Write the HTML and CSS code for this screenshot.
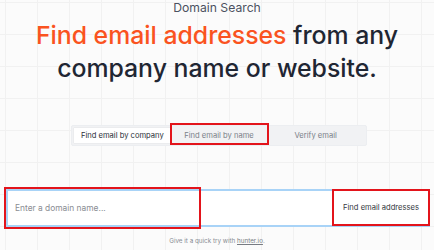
FILE: index.html
```html
<!DOCTYPE html>
<html>
<head>
<meta charset="utf-8">
<link rel="stylesheet" href="styles.css">
</head>
<body>
<main class="page">
  <p class="eyebrow">Domain Search</p>
  <h1 class="title"><span class="accent">Find email addresses</span> from any<br>company name or website.</h1>
  <nav class="tabs">
    <span class="tab active">Find email by company</span>
    <span class="tab marked">Find email by name</span>
    <span class="tab">Verify email</span>
  </nav>
  <form class="search">
    <div class="field"><span class="placeholder">Enter a domain name...</span></div>
    <button class="submit" type="button">Find email addresses</button>
  </form>
  <p class="hint">Give it a quick try with <a href="#">hunter.io</a>.</p>
</main>
</body>
</html>
```
FILE: styles.css
```css
* { box-sizing: border-box; }
html, body { margin: 0; }
body {
  width: 434px;
  height: 250px;
  overflow: hidden;
  font-family: Inter, "Liberation Sans", sans-serif;
  background-color: #fbfbfb;
  background-image:
    linear-gradient(to right, #f1f1f1 1px, transparent 1px),
    linear-gradient(to bottom, #f1f1f1 1px, transparent 1px);
  background-size: 32px 32px;
  background-position: 5px 2px;
}
.page {
  display: flex;
  flex-direction: column;
  align-items: center;
}
.eyebrow {
  margin: 0;
  font-size: 12.2px;
  line-height: 16px;
  color: #4b5160;
}
.title {
  margin: 3px 0 0;
  font-size: 24.8px;
  line-height: 33px;
  font-weight: 500;
  text-align: center;
  color: #1f2633;
}
.accent { color: #fa5320; }
.tabs {
  margin-top: 40px;
  margin-left: 4px;
  width: 296px;
  height: 21px;
  padding: 2px;
  display: flex;
  background: #f1f2f4;
  border: 1px solid #eceef1;
  border-radius: 2px;
}
.tab {
  flex: 1;
  display: flex;
  align-items: center;
  justify-content: center;
  font-size: 7.6px;
  white-space: nowrap;
  color: #7a7f88;
  position: relative;
}
.tab.active {
  background: #fff;
  color: #2a2f38;
  box-shadow: 0 0 1px rgba(0,0,0,0.15);
}
.tab.marked::after {
  content: "";
  position: absolute;
  left: -1px; right: -2px; top: -5px; bottom: -2px;
  border: 2px solid #e3141b;
}
.search {
  margin-top: 43px;
  margin-left: 2px;
  width: 424px;
  height: 38px;
  display: flex;
  background: #fff;
  border: 2px solid #a8d3f7;
  position: relative;
}
.field {
  flex: 1;
  display: flex;
  align-items: center;
  padding-left: 7px;
  position: relative;
}
.field::after {
  content: "";
  position: absolute;
  left: -4px; top: -4px; bottom: -4px;
  width: 193px;
  border: 2.5px solid #e3141b;
}
.placeholder {
  font-size: 8.4px;
  color: #8a8d93;
}
.submit {
  width: 98px;
  margin: -2px -2px -1px 0;
  background: #fff;
  border: 2.5px solid #e3141b;
  font-family: inherit;
  font-size: 7.6px;
  white-space: nowrap;
  color: #333840;
  padding: 0;
}
.hint {
  margin: 9px 0 0;
  font-size: 6.3px;
  line-height: 10px;
  color: #888c93;
}
.hint a { color: #777b82; }
```
